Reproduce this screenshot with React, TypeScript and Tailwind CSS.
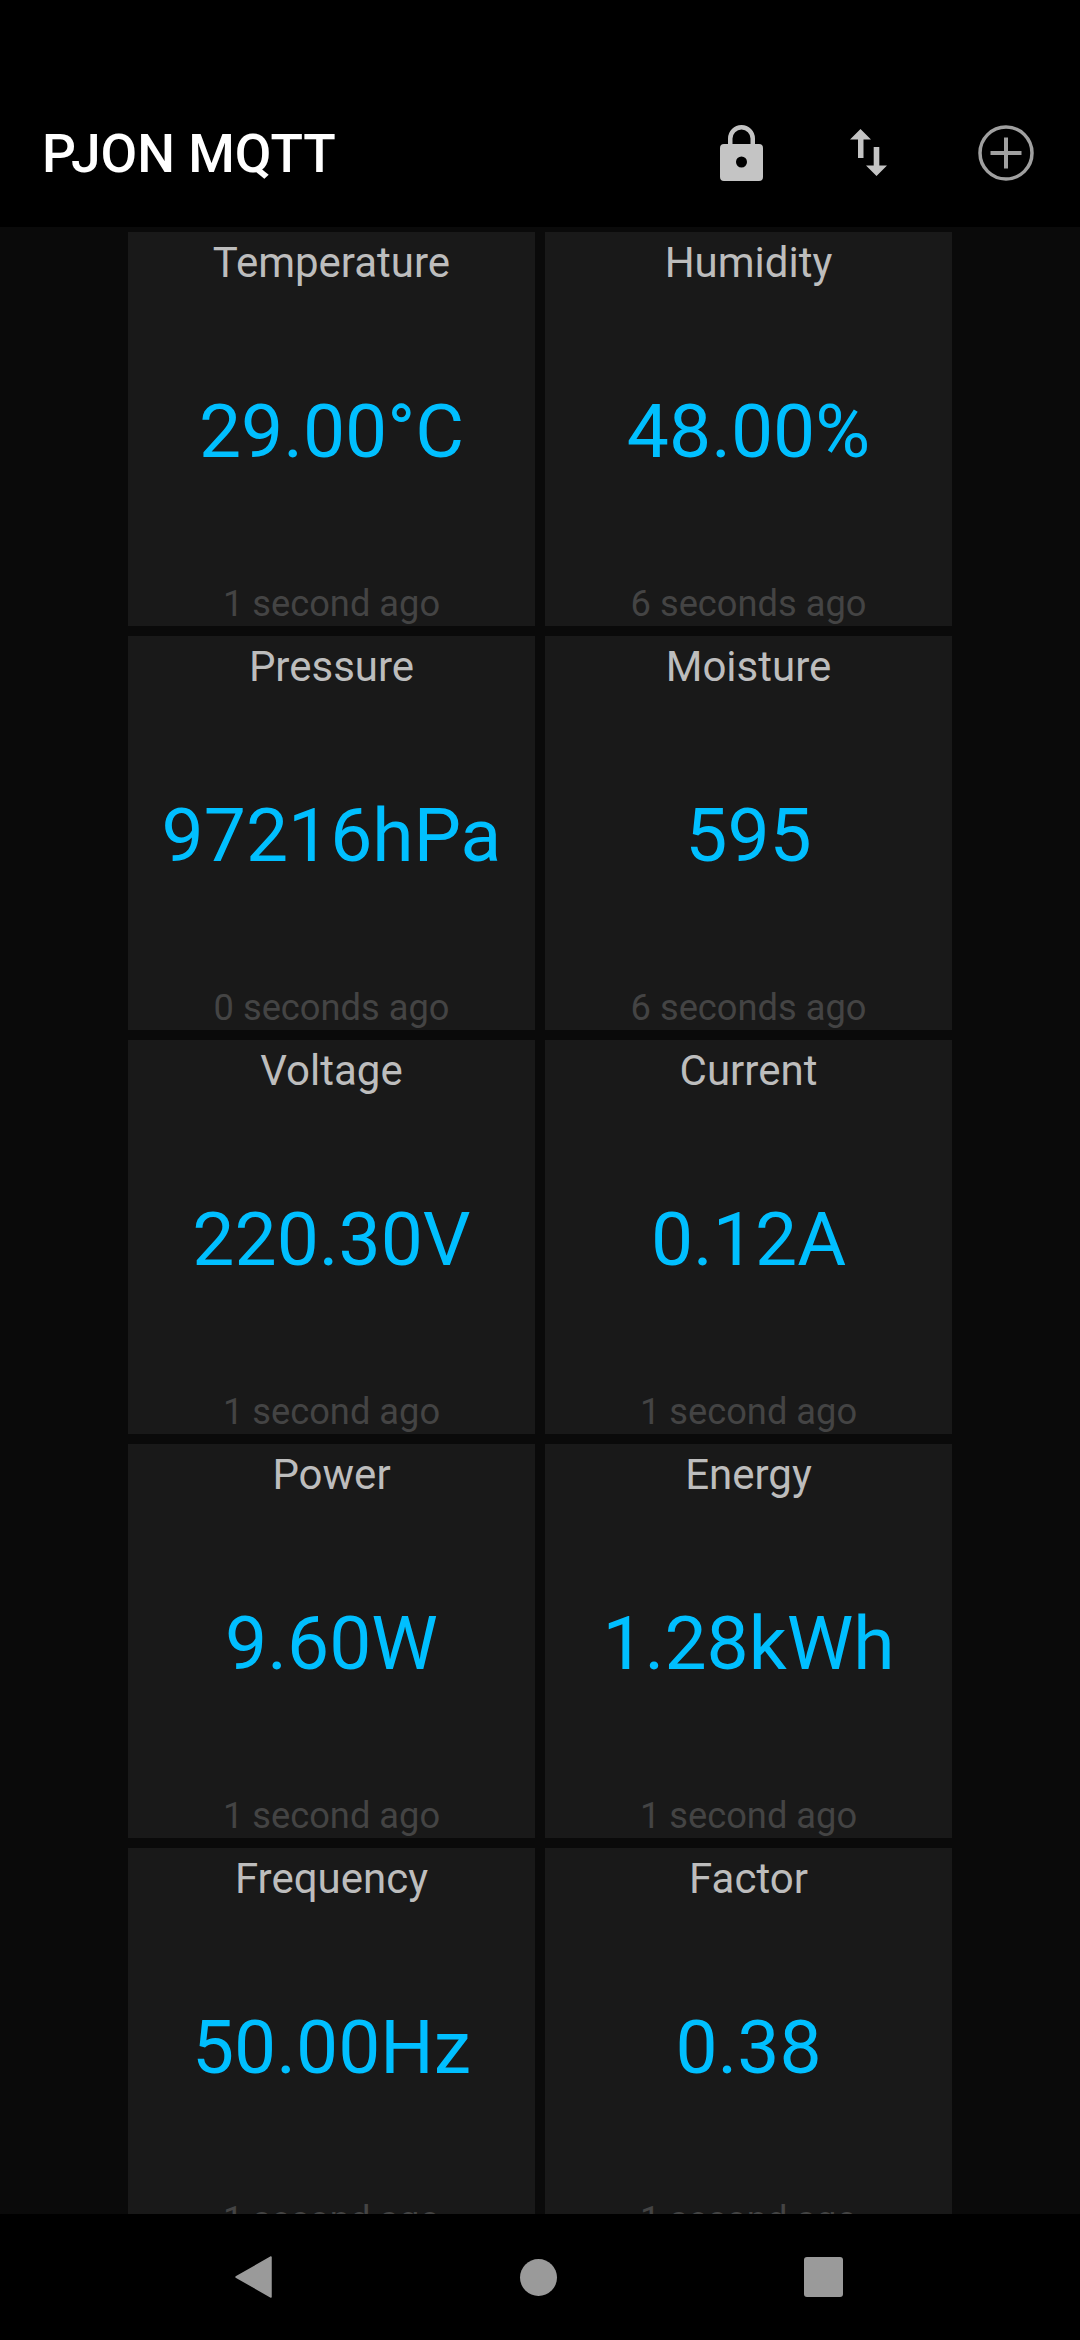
const readings = [
  { label: "Temperature", value: "29.00°C", time: "1 second ago" },
  { label: "Humidity", value: "48.00%", time: "6 seconds ago" },
  { label: "Pressure", value: "97216hPa", time: "0 seconds ago" },
  { label: "Moisture", value: "595", time: "6 seconds ago" },
  { label: "Voltage", value: "220.30V", time: "1 second ago" },
  { label: "Current", value: "0.12A", time: "1 second ago" },
  { label: "Power", value: "9.60W", time: "1 second ago" },
  { label: "Energy", value: "1.28kWh", time: "1 second ago" },
  { label: "Frequency", value: "50.00Hz", time: "1 second ago" },
  { label: "Factor", value: "0.38", time: "1 second ago" },
];

const Card = ({ label, value, time }: { label: string; value: string; time: string }) => (
  <div className="h-[394px] bg-[#191919] flex flex-col items-center">
    <div className="text-[42px] leading-[56px] mt-[3px] text-[#bdbdbd]">{label}</div>
    <div className="flex-1 flex items-center text-[75px] leading-none text-[#00bfff] pb-[8px]">{value}</div>
    <div className="text-[36.250px] leading-[48px] mb-[-2px] text-[#444444]">{time}</div>
  </div>
);

const App = () => {
  return (
    <div className="w-[1080px] h-[2340px] flex flex-col bg-[#0a0a0a] overflow-hidden font-['Roboto',sans-serif]">
      <header className="h-[227px] shrink-0 bg-black flex items-center pt-[78px] pl-[42px] pr-[46px]">
        <h1 className="text-[53.250px] leading-[64px] font-medium text-white mt-[3px]">PJON MQTT</h1>
        <div className="ml-auto flex items-center">
          <svg width="43" height="56" viewBox="0 0 43 56" className="mr-[87px]" fill="#c4c4c4">
            <path d="M8 20v-6.500a13.500 13.500 0 0 1 27 0V20h-4.500v-6.500a9 9 0 0 0-18 0V20z" />
            <path
              fillRule="evenodd"
              d="M4 19h35a4 4 0 0 1 4 4v29a4 4 0 0 1-4 4H4a4 4 0 0 1-4-4V23a4 4 0 0 1 4-4zm17.500 12.500a5.500 5.500 0 1 0 0 11 5.500 5.500 0 0 0 0-11z"
            />
          </svg>
          <svg width="37" height="47" viewBox="0 0 37 47" className="mr-[91px]" fill="#c4c4c4">
            <path d="M10.500 0 21 10.500h-7.500V29H8V10.500H0zM26.500 47 16 36.500h7.700V18h5.600v18.500H37z" />
          </svg>
          <svg width="56" height="56" viewBox="0 0 56 56" fill="none" stroke="#a0a0a0" strokeWidth="3.500">
            <circle cx="28" cy="28" r="26" />
            <path d="M28 12.500v31M12.500 28h31" strokeWidth="4" />
          </svg>
        </div>
      </header>

      <main className="flex-1 overflow-hidden pt-[5px]">
        <div className="w-[824px] mx-auto grid grid-cols-2 gap-[10px]">
          {readings.map((r) => (
            <Card key={r.label} {...r} />
          ))}
        </div>
      </main>

      <nav className="h-[126px] shrink-0 bg-black flex items-center justify-between pl-[235px] pr-[237px]">
        <svg width="37" height="42" viewBox="0 0 37 42" fill="#9a9a9a">
          <path d="M36 1v40L1 21z" stroke="#9a9a9a" strokeWidth="1.500" strokeLinejoin="round" />
        </svg>
        <div className="w-[37px] h-[37px] ml-[1px] rounded-full bg-[#9a9a9a]" />
        <div className="w-[39px] h-[40px] rounded-[3px] bg-[#9a9a9a]" />
      </nav>
    </div>
  );
};

export default App;
